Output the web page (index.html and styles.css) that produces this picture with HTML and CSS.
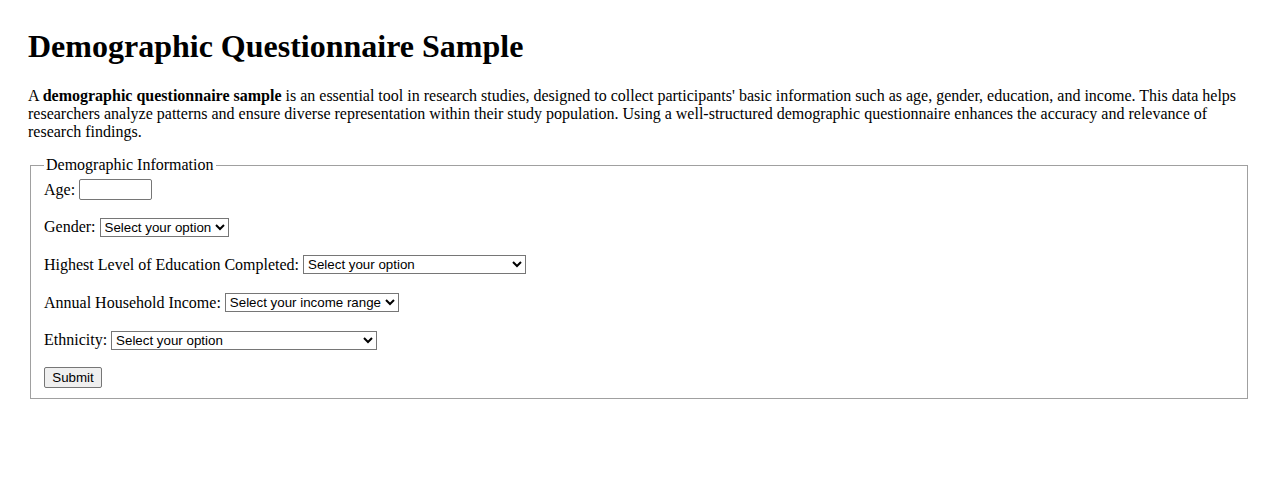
FILE: index.html
```html
<!DOCTYPE html>
<html lang="en">
<head>
<meta charset="utf-8">
<title>Demographic Questionnaire Sample</title>
<link rel="stylesheet" href="styles.css">
</head>
<body>
<h1 class="title">Demographic Questionnaire Sample</h1>
<p class="intro">A <strong>demographic questionnaire sample</strong> is an essential tool in research studies, designed to collect participants' basic information such as age, gender, education, and income. This data helps researchers analyze patterns and ensure diverse representation within their study population. Using a well-structured demographic questionnaire enhances the accuracy and relevance of research findings.</p>
<form class="form">
  <fieldset class="box">
    <legend class="legend">Demographic Information</legend>
    <div class="row">
      <label for="age">Age:</label>
      <input type="text" id="age" class="age">
    </div>
    <div class="row">
      <label for="gender">Gender:</label>
      <select id="gender" class="sel sel-gender">
        <option>Select your option</option>
      </select>
    </div>
    <div class="row">
      <label for="edu">Highest Level of Education Completed:</label>
      <select id="edu" class="sel sel-edu">
        <option>Select your option</option>
      </select>
    </div>
    <div class="row">
      <label for="income">Annual Household Income:</label>
      <select id="income" class="sel sel-income">
        <option>Select your income range</option>
      </select>
    </div>
    <div class="row">
      <label for="eth">Ethnicity:</label>
      <select id="eth" class="sel sel-eth">
        <option>Select your option</option>
      </select>
    </div>
    <div class="row row-last">
      <button type="submit" class="btn">Submit</button>
    </div>
  </fieldset>
</form>
</body>
</html>
```
FILE: styles.css
```css
html, body {
  background: #fff;
}
body {
  margin: 0;
  padding: 28px 28px 20px 28px;
  font-family: "Liberation Serif", "Times New Roman", serif;
  font-size: 16px;
  color: #000;
}
.title {
  font-size: 32px;
  font-weight: bold;
  margin: 0 0 22px 0;
  line-height: 37px;
}
.intro {
  margin: 0 0 15px 0;
  line-height: normal;
}
.form {
  margin: 0;
}
.box {
  margin: 0 2px;
  padding: 5px 12px 10px 13px;
  border: 1px solid #a0a0a0;
}
.legend {
  padding: 0 2px;
}
.row {
  display: flex;
  align-items: center;
  gap: 4px;
  height: 21px;
  margin-bottom: 16.7px;
}
.row-last {
  margin-bottom: 0;
}
.age {
  width: 73px;
  height: 21px;
  box-sizing: border-box;
  border: 1px solid #767676;
  border-radius: 2px;
  padding: 1px 2px;
  font-family: "Liberation Sans", Arial, sans-serif;
  font-size: 13.333px;
}
.sel {
  height: 19px;
  box-sizing: border-box;
  border: 1px solid #767676;
  border-radius: 0;
  font-family: "Liberation Sans", Arial, sans-serif;
  font-size: 13.333px;
  background: #fff;
  color: #000;
}
.sel-gender { width: 129px; }
.sel-edu { width: 223px; }
.sel-income { width: 174px; }
.sel-eth { width: 266px; }
.btn {
  width: 58px;
  height: 21px;
  box-sizing: border-box;
  border: 1px solid #767676;
  border-radius: 2px;
  background: #efefef;
  font-family: "Liberation Sans", Arial, sans-serif;
  font-size: 13.333px;
  padding: 0;
  color: #000;
}
```
